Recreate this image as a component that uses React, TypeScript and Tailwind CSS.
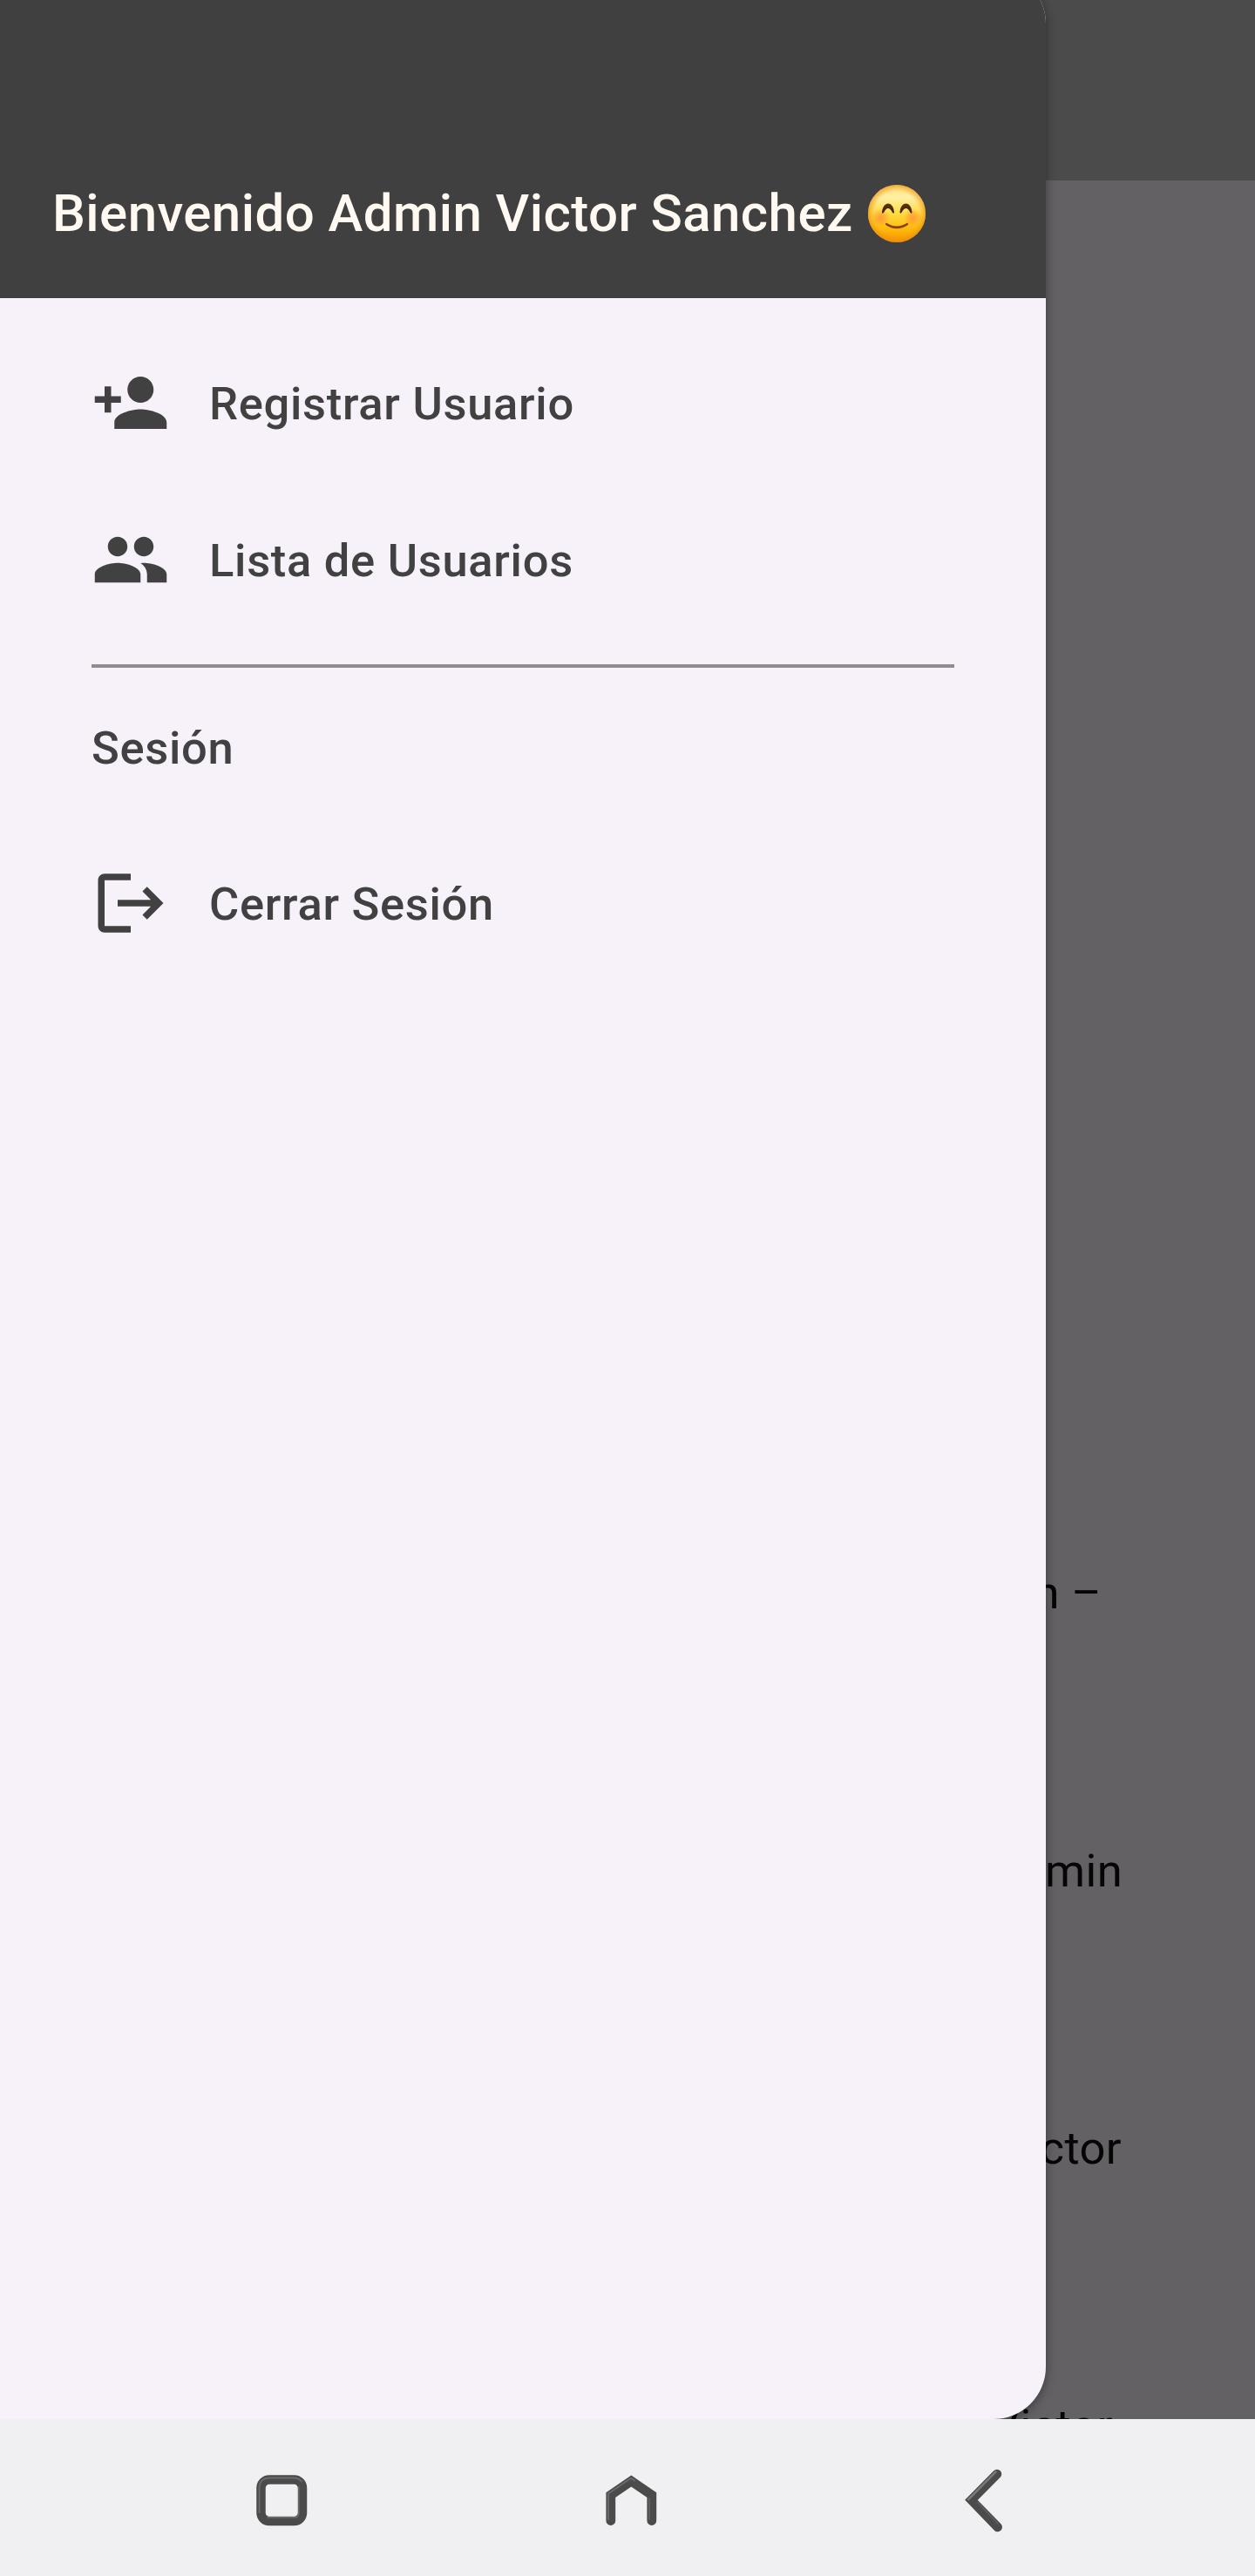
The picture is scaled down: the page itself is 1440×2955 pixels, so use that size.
import { MdGroup, MdLogout, MdPersonAdd } from "react-icons/md";
import type { ReactNode } from "react";

function Emoji() {
  return (
    <svg viewBox="0 0 68 68" className="mb-[2px] ml-[16px] size-[68px] shrink-0" aria-label="😊">
      <defs>
        <linearGradient id="face" x1="0" y1="0" x2="0" y2="1">
          <stop offset="0" stopColor="#fde07a" />
          <stop offset="0.22" stopColor="#fff0a4" />
          <stop offset="0.48" stopColor="#ffdd48" />
          <stop offset="0.72" stopColor="#ffc210" />
          <stop offset="1" stopColor="#f59300" />
        </linearGradient>
        <radialGradient id="rim" cx="0.5" cy="0.5" r="0.5">
          <stop offset="0.76" stopColor="#f29a10" stopOpacity="0" />
          <stop offset="1" stopColor="#ea8a10" stopOpacity="0.65" />
        </radialGradient>
        <radialGradient id="blush">
          <stop offset="0" stopColor="#ff8a3c" stopOpacity="0.75" />
          <stop offset="0.5" stopColor="#ff9438" stopOpacity="0.5" />
          <stop offset="1" stopColor="#ffa030" stopOpacity="0" />
        </radialGradient>
        <linearGradient id="eye" x1="0" y1="0" x2="0" y2="1">
          <stop offset="0" stopColor="#5a3410" />
          <stop offset="1" stopColor="#3f200b" />
        </linearGradient>
      </defs>
      <circle cx="34" cy="34" r="33" fill="url(#face)" />
      <circle cx="34" cy="34" r="33" fill="url(#rim)" />
      <circle cx="15.500" cy="39" r="11" fill="url(#blush)" />
      <circle cx="52.500" cy="39" r="11" fill="url(#blush)" />
      <path d="M17 32.500C18 19.200 30 19.200 31 32.500C31 34 29.500 34 28.800 32.500C26 26.500 22 26.500 19.200 32.500C18.500 34 17 34 17 32.500Z" fill="url(#eye)" />
      <path d="M37.500 32.500C38.500 19.200 50.500 19.200 51.500 32.500C51.500 34 50 34 49.300 32.500C46.500 26.500 42.500 26.500 39.700 32.500C39 34 37.500 34 37.500 32.500Z" fill="url(#eye)" />
      <path d="M21.200 45.200C20.500 46 21 46.800 22 47.500C29 52.400 39 52.400 46 47.500C47 46.800 47.500 46 46.800 45.200C46.200 44.500 45.400 45 44.500 45.600C38 49.400 30 49.400 23.500 45.600C22.600 45 21.800 44.500 21.200 45.200Z" fill="#8f3d0c" />
    </svg>
  );
}

function DrawerItem({ icon, label }: { icon: ReactNode; label: string }) {
  return (
    <li className="flex h-[180px] items-center gap-[45px]">
      {icon}
      <span className="pt-[3px]">{label}</span>
    </li>
  );
}

const pageLines = [
  { text: "Bienvenido Admin –", inset: "pr-[176px]" },
  { text: "Admin", inset: "pr-[152px]" },
  { text: "Victor", inset: "pr-[153px]" },
  { text: "Victor", inset: "pr-[163px]" },
];

function Page() {
  return (
    <div className="flex h-full flex-col bg-[#636163]">
      <div className="h-[207px] shrink-0 bg-[#4b4b4b]" />
      <div className="flex flex-col pt-[1461px] text-right text-[52.5px] leading-[318.6px] tracking-[0.00714em] text-[#050505]">
        {pageLines.map((line, i) => (
          <p key={i} className={line.inset}>{line.text}</p>
        ))}
      </div>
    </div>
  );
}

function Drawer() {
  return (
    <aside className="absolute top-[-33px] left-0 h-[2808px] w-[1200px] overflow-hidden rounded-r-[60px] bg-[#f7f2fa] text-[52.5px] font-medium tracking-[0.0134em] text-[#414141] shadow-[0_3px_12px_rgba(0,0,0,0.4)]">
      <header className="flex h-[375px] items-end bg-[#404040] px-[60px] pb-[61px] text-[60px] leading-[72px] tracking-[0.0073em] text-[#fff9f2]">
        <h1>Bienvenido Admin Victor Sanchez</h1>
        <Emoji />
      </header>
      <nav className="px-[105px] pt-[30px]">
        <ul>
          <DrawerItem icon={<MdPersonAdd className="size-[90px]" />} label="Registrar Usuario" />
          <DrawerItem icon={<MdGroup className="size-[90px]" />} label="Lista de Usuarios" />
        </ul>
        <hr className="mt-[30px] h-[4px] border-0 bg-[#8f8d90]" />
        <h2 className="flex h-[180px] items-center pt-1">Sesión</h2>
        <ul>
          <DrawerItem icon={<MdLogout className="size-[90px]" />} label="Cerrar Sesión" />
        </ul>
      </nav>
    </aside>
  );
}

function SystemBar() {
  return (
    <footer className="flex h-[180px] items-center bg-[#f0f0f2] pt-[6px] pl-[293px]">
      <svg viewBox="0 0 60 60" className="size-[60px]" fill="none">
        <rect x="6.500" y="6.500" width="47.500" height="47.500" rx="9.500" stroke="#4b4b4b" strokeWidth="10.500" />
        <path d="M4.500 44V16C4.500 9 9 4.500 16 4.500H44C48 4.500 51 6 53 8.500" stroke="#6c6c6c" strokeWidth="1.800" strokeLinecap="round" />
        <path d="M14 49.800H46Q49.800 49.300 49.800 45V15" stroke="#6c6c6c" strokeWidth="1.500" strokeLinecap="round" />
      </svg>
      <svg viewBox="0 0 60 60" className="ml-[341px] size-[60px]" fill="none">
        <path d="M6.800 53.500V24L30.300 8L53.800 24V53.500" stroke="#4b4b4b" strokeWidth="10.800" strokeLinecap="round" strokeLinejoin="miter" />
        <path d="M4 52V22.500L30 4.800L34 7.500" stroke="#6c6c6c" strokeWidth="1.800" strokeLinecap="round" strokeLinejoin="round" />
        <path d="M51 28V52" stroke="#666666" strokeWidth="1.500" strokeLinecap="round" />
      </svg>
      <svg viewBox="0 0 60 80" className="ml-[346px] h-[80px] w-[60px]" fill="none">
        <path d="M44 10L14.500 39.800L44.700 71" stroke="#4b4b4b" strokeWidth="10.500" strokeLinecap="round" strokeLinejoin="miter" />
        <path d="M42.500 7.500L11 39.300" stroke="#7c7c7c" strokeWidth="2.400" strokeLinecap="round" />
        <path d="M21.500 42L45 67" stroke="#5f5f5f" strokeWidth="1.500" strokeLinecap="round" />
      </svg>
    </footer>
  );
}

export default function App() {
  return (
    <div className="flex h-[2955px] w-[1440px] flex-col overflow-hidden font-[Roboto,sans-serif]">
      <main className="relative h-[2775px] overflow-hidden">
        <Page />
        <Drawer />
      </main>
      <SystemBar />
    </div>
  );
}
